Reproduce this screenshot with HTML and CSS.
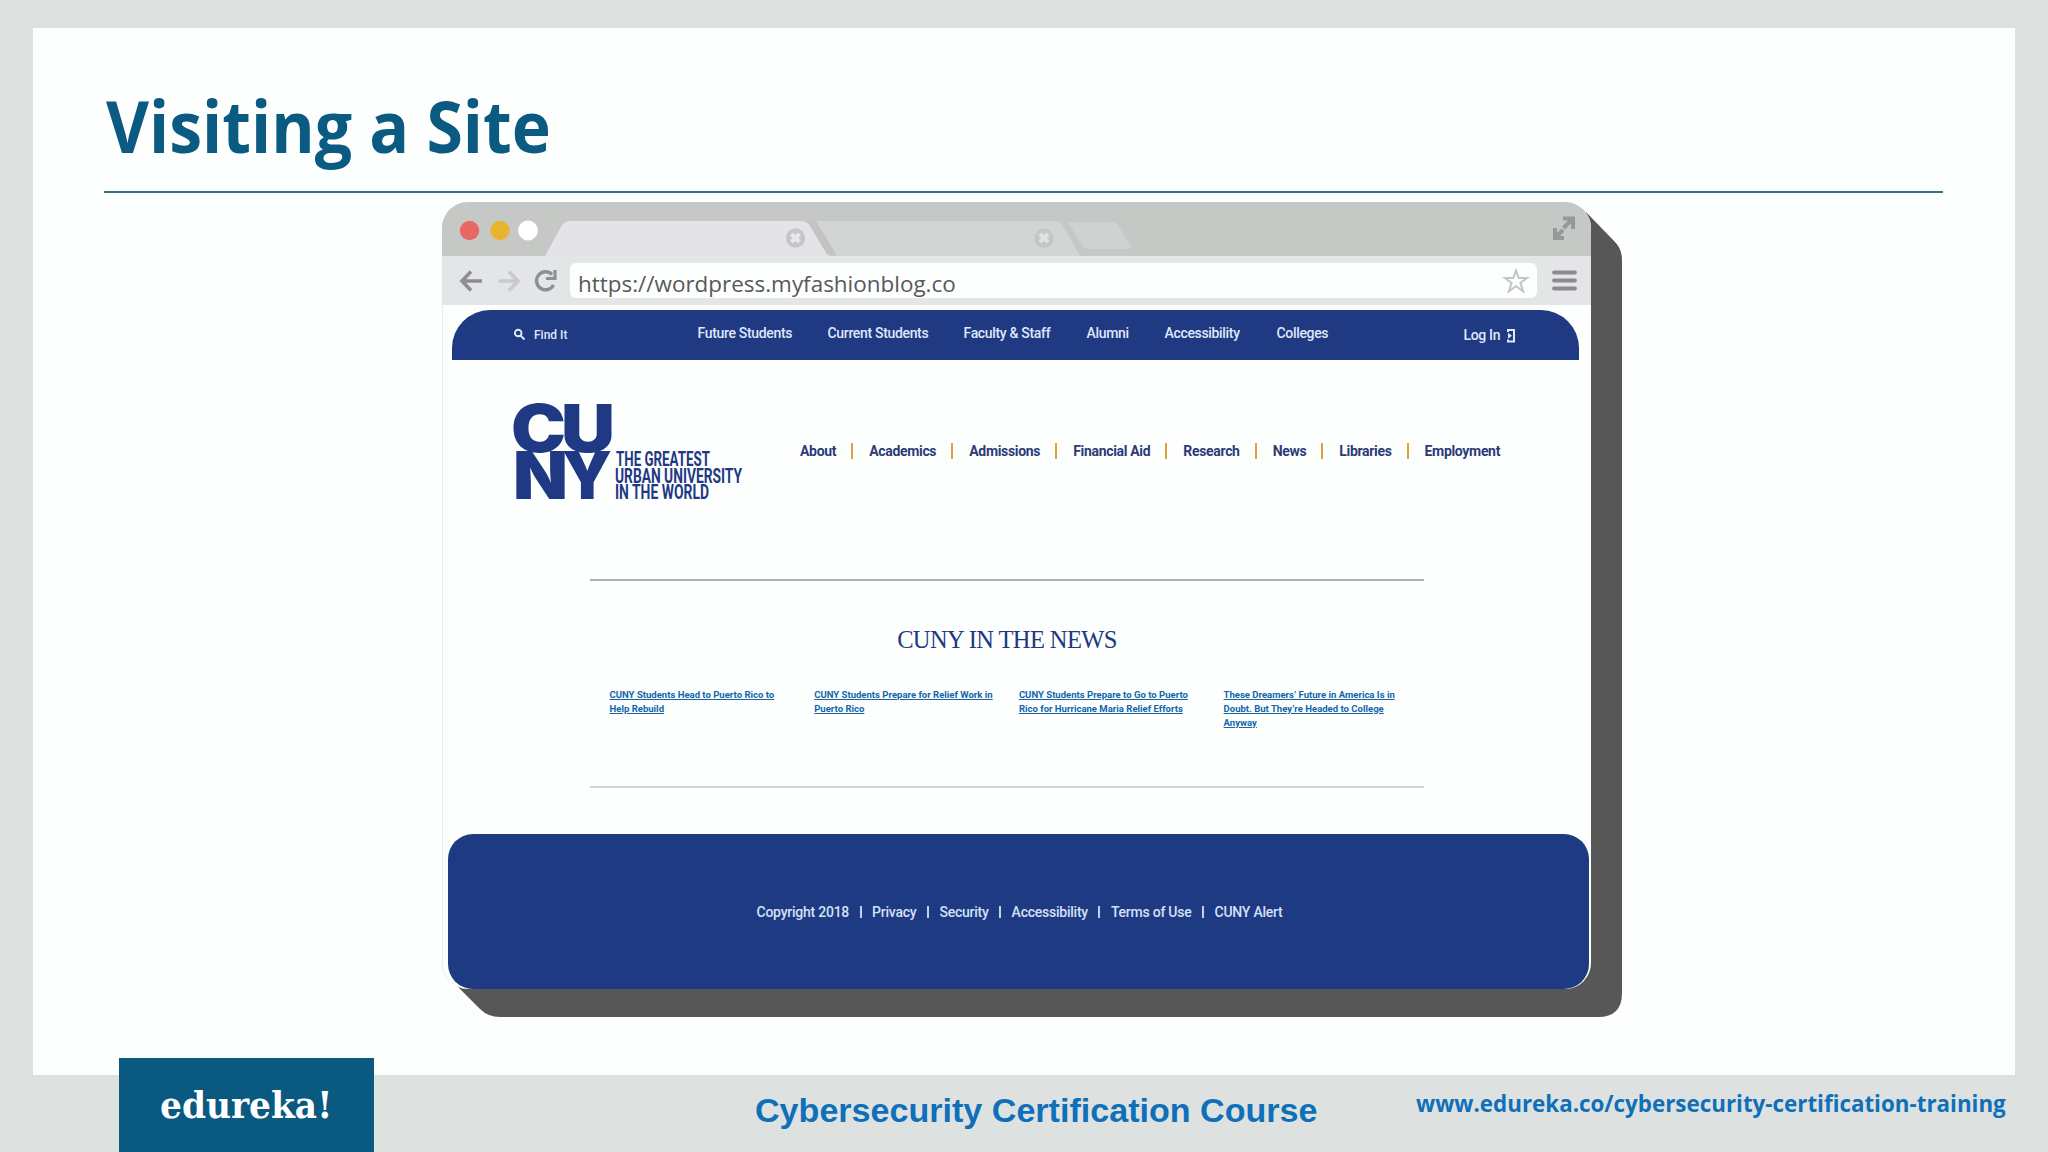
FILE: index.html
```html
<!DOCTYPE html>
<html lang="en">
<head>
  <meta charset="UTF-8">
  <title>Visiting a Site</title>
  <link rel="stylesheet" href="styles.css">
</head>
<body>

  <main class="slide">
    <h1><span>Visiting a Site</span></h1>

    <div class="browser">
      <!-- 3D edge behind the window -->
      <svg class="edge" width="1180" height="815" viewBox="0 0 1180 815">
        <path d="M1144 10 L1173 40 Q1180 47 1180 58 V791 Q1180 815 1156 815 H58 Q46 815 38 807 L14 783 Z" fill="#585758"/>
      </svg>

      <div class="window">
        <div class="tabs">
          <svg width="1149" height="54" viewBox="0 0 1149 54">
            <circle cx="27.5" cy="28.5" r="9.7" fill="#e96765"/>
            <circle cx="58" cy="28.5" r="9.7" fill="#e8b32f"/>
            <circle cx="86" cy="28.5" r="9.9" fill="#fff"/>
            <path d="M374 19 H612 Q618 19 621 24 L638 54 H395 Z" fill="#d3d5d5"/>
            <path d="M626 20 H669 Q674 20 676 23 L688 43 Q690 47 686 47 H646 Q642 47 640 43 Z" fill="#d0d2d2"/>
            <path d="M362 19 H374 L394 52 H386 Z" fill="#c2c4c4"/>
            <path d="M103 54 L119 25 Q122 19 128 19 H359 Q365 19 368 24 L384 51 Q386 54 390 54 Z" fill="#e4e4e8"/>
            <circle cx="353.5" cy="36" r="9.7" fill="#c5c6c7"/>
            <path d="M349.5 32 l8 8 m0 -8 l-8 8" stroke="#e9e9eb" stroke-width="4"/>
            <circle cx="602" cy="36" r="9.7" fill="#c5c7c7"/>
            <path d="M598 32 l8 8 m0 -8 l-8 8" stroke="#e1e3e3" stroke-width="4"/>
            <g stroke="#979998" stroke-width="4" fill="none">
              <path d="M1121 16.500 H1131 V27 M1130 17.500 L1121.500 26"/>
              <path d="M1122 36 H1113 V26 M1114 35 L1121 28"/>
            </g>
          </svg>
        </div>

        <div class="toolbar">
          <svg width="120" height="49" viewBox="0 0 120 49" fill="none">
            <path d="M29 15.500 L20 25 L29 34.500 M20.500 25 H40" stroke="#8e8f91" stroke-width="3.600"/>
            <path d="M67 15.500 L76 25 L67 34.500 M75.500 25 H56.500" stroke="#c9cacc" stroke-width="3.600"/>
            <path d="M110 18.500 A9 9 0 1 0 111.500 29" stroke="#8e8f91" stroke-width="3.400"/>
            <path d="M113 14 V22.500 H104" stroke="#8e8f91" stroke-width="3.200"/>
          </svg>
          <div class="address">
            <span>https://wordpress.myfashionblog.co</span>
            <svg width="26" height="26" viewBox="0 0 26 26">
              <path d="M13 2.500 L15.700 10.100 H24 L17.400 14.900 L20.200 23.500 L13 18.300 L5.800 23.500 L8.600 14.900 L2 10.100 H10.300 Z" fill="none" stroke="#c3c4c9" stroke-width="2"/>
            </svg>
          </div>
          <svg width="25" height="21" viewBox="0 0 25 21" stroke="#8b8c8e" stroke-width="3.800" stroke-linecap="round">
            <path d="M2 2.500 H23 M2 10.500 H23 M2 18.500 H23"/>
          </svg>
        </div>

        <header class="topbar">
          <span class="find">
            <svg width="12" height="12" viewBox="0 0 12 12" fill="none" stroke="#dfe8fb" stroke-width="1.900">
              <circle cx="4.200" cy="4" r="3.300"/>
              <path d="M6.500 6.500 L10.500 10.500"/>
            </svg>
            Find It
          </span>
          <nav>
            <a>Future Students</a>
            <a>Current Students</a>
            <a>Faculty &amp; Staff</a>
            <a>Alumni</a>
            <a>Accessibility</a>
            <a>Colleges</a>
          </nav>
          <span class="login">
            Log In
            <svg width="8" height="14" viewBox="0 0 8 14" fill="none" stroke="#dfe8fb" stroke-width="2">
              <path d="M0 3 V1 H6 V12.500 H0 V10.500"/>
              <path d="M0 3.800 L4 6.800 L0 9.800 Z" fill="#dfe8fb" stroke="none"/>
            </svg>
          </span>
        </header>

        <section class="masthead">
          <svg class="logo" width="240" height="110" viewBox="0 0 240 110">
            <g class="logo-mark">
              <text x="-2" y="55.500" textLength="55" lengthAdjust="spacingAndGlyphs">C</text>
              <text x="48" y="55.500" textLength="54" lengthAdjust="spacingAndGlyphs">U</text>
              <text x="0" y="103" textLength="55" lengthAdjust="spacingAndGlyphs">N</text>
              <text x="49" y="103" textLength="50" lengthAdjust="spacingAndGlyphs">Y</text>
            </g>
            <g class="logo-tag">
              <text x="103" y="70" textLength="94" lengthAdjust="spacingAndGlyphs">THE GREATEST</text>
              <text x="102" y="86.500" textLength="127" lengthAdjust="spacingAndGlyphs">URBAN UNIVERSITY</text>
              <text x="102" y="103" textLength="94" lengthAdjust="spacingAndGlyphs">IN THE WORLD</text>
            </g>
          </svg>
          <nav>
            <a>About</a>
            <a>Academics</a>
            <a>Admissions</a>
            <a>Financial Aid</a>
            <a>Research</a>
            <a>News</a>
            <a>Libraries</a>
            <a>Employment</a>
          </nav>
        </section>

        <section class="news">
          <h2>CUNY IN THE NEWS</h2>
          <div class="stories">
            <a>CUNY Students Head to Puerto Rico to<br>Help Rebuild</a>
            <a>CUNY Students Prepare for Relief Work in<br>Puerto Rico</a>
            <a>CUNY Students Prepare to Go to Puerto<br>Rico for Hurricane Maria Relief Efforts</a>
            <a>These Dreamers’ Future in America Is in<br>Doubt. But They’re Headed to College<br>Anyway</a>
          </div>
        </section>

        <footer class="site-footer">
          <span>Copyright 2018</span>
          <a>Privacy</a>
          <a>Security</a>
          <a>Accessibility</a>
          <a>Terms of Use</a>
          <a>CUNY Alert</a>
        </footer>
      </div>
    </div>
  </main>

  <footer class="slide-footer">
    <div class="brand"><span>edureka!</span></div>
    <div class="course"><span>Cybersecurity Certification Course</span></div>
    <div class="link"><span>www.edureka.co/cybersecurity-certification-training</span></div>
  </footer>

</body>
</html>
```
FILE: styles.css
```css
* {
  box-sizing: border-box;
}

body {
  margin: 0;
  padding: 28px 33px 0;
  width: 2048px;
  height: 1152px;
  overflow: hidden;
  background: #dde2e1;
  font-family: Roboto, sans-serif;
}

svg {
  display: block;
  flex: none;
  overflow: visible;
}

.slide {
  height: 1047px;
  padding: 0 72px 0 71px;
  background: #fdfffe;
}

h1 {
  margin: 0;
  height: 165px;
  padding: 50px 0 0 2px;
  border-bottom: 2px solid #33708a;
  color: #0a5a82;
  font: bold 71px/95px "Open Sans", sans-serif;
}

h1 span {
  display: inline-block;
  transform: scaleX(0.932);
  transform-origin: left;
}

/* browser window */

.browser {
  position: relative;
  width: 1149px;
  margin: 9px 0 0 338px;
}

.edge {
  position: absolute;
  top: 0;
  left: 0;
}

.window {
  position: relative;
  height: 787px;
  border-radius: 26px;
  overflow: hidden;
  background: #fdfffe;
  box-shadow: inset 1px 0 #e9eeec;
}

.tabs {
  height: 54px;
  background: #c6c8c6;
}

.toolbar {
  display: flex;
  align-items: center;
  height: 49px;
  background: #e4e5e7;
}

.address {
  display: flex;
  align-items: center;
  justify-content: space-between;
  width: 967px;
  height: 35px;
  margin: 0 15px 0 8px;
  padding: 0 8px;
  border-radius: 6px;
  background: #fdfffe;
  color: #58595b;
  font: 22px/35px "Open Sans", sans-serif;
}

.address span {
  padding-top: 6px;
  transform: scaleX(1.02);
  transform-origin: left;
}

.topbar {
  display: flex;
  width: 1127px;
  height: 50px;
  margin: 5px 0 0 10px;
  padding-left: 62px;
  border-radius: 38px 38px 0 0;
  background: #1f3982;
  color: #dfe8fb;
  font-size: 14px;
  font-weight: 500;
  letter-spacing: -0.33px;
  line-height: 47px;
}

.topbar .find {
  display: flex;
  align-items: center;
  gap: 8px;
  width: 183.5px;
  font-size: 12px;
  letter-spacing: 0;
}

.topbar nav {
  display: grid;
  grid-template-columns: 130px 136px 123px 78px 112px 187px;
}

.topbar .login {
  display: flex;
  align-items: center;
  gap: 8px;
  padding-top: 1px;
}

.masthead {
  display: flex;
  height: 219px;
  padding: 36px 0 0 71px;
}

.masthead nav {
  display: flex;
  align-items: center;
  height: 16px;
  margin: 47px 0 0 47px;
  color: #2b3b78;
  font-size: 14px;
  font-weight: 700;
  letter-spacing: -0.32px;
}

.masthead a {
  line-height: 16px;
}

.masthead a + a {
  margin-left: 15px;
  padding-left: 16px;
  border-left: 2px solid #e79d3c;
}

.logo-mark {
  fill: #1f3984;
  font: 900 65.5px Inter, sans-serif;
}

.logo-tag {
  fill: #1f3984;
  font: bold 19.5px Roboto, sans-serif;
}

.news {
  width: 834px;
  height: 209px;
  margin-left: 148px;
  border-top: 2px solid #adafb5;
  border-bottom: 2px solid #d3d4dc;
}

.news h2 {
  margin: 42px 0 0;
  color: #20387f;
  font: 24.5px/34px "Liberation Serif", serif;
  letter-spacing: -0.6px;
  text-align: center;
}

.stories {
  display: grid;
  grid-template-columns: repeat(4, 204.7px);
  margin: 30.5px 0 0 19.5px;
  color: #1265a8;
  font-size: 9.54px;
  font-weight: 700;
  line-height: 14px;
  text-decoration: underline;
  white-space: nowrap;
}

.site-footer {
  display: flex;
  align-items: center;
  width: 1141px;
  height: 155px;
  margin: 46px 0 0 5.5px;
  padding-left: 309px;
  border-radius: 25px;
  background: #1e3a83;
  color: #d5e0f7;
  font-size: 14px;
  font-weight: 500;
  letter-spacing: -0.24px;
  line-height: 12px;
}

.site-footer a {
  margin-left: 10.5px;
  padding-left: 10.5px;
  border-left: 2px solid #c3d1f0;
}

/* strip under the slide */

.slide-footer {
  display: flex;
  height: 77px;
  color: #0f6fb9;
  white-space: nowrap;
}

.slide-footer div {
  flex: none;
}

.slide-footer span {
  display: inline-block;
  transform-origin: left;
}

.brand {
  width: 255px;
  height: 94px;
  margin: -17px 0 0 86px;
  padding-left: 41px;
  background: #0a5981;
  color: #fff;
  font: bold 37px/94px "DejaVu Serif", serif;
}

.brand span {
  transform: scaleX(0.93);
}

.course {
  width: 1042px;
  padding-left: 381px;
  font: bold 34.1px/70px "Liberation Sans", sans-serif;
}

.link {
  font: bold 24px/56px "Open Sans", sans-serif;
}

.link span {
  transform: scaleX(0.932);
}
```
